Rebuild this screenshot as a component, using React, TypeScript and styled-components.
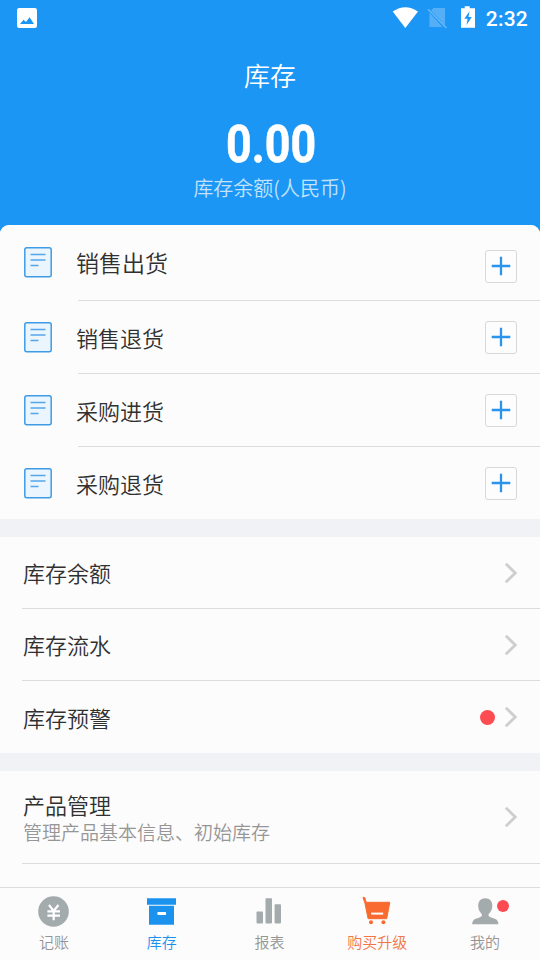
import React from "react";
import styled, { createGlobalStyle } from "styled-components";

const GlobalStyle = createGlobalStyle`
  * { box-sizing: border-box; }
  html, body { margin: 0; padding: 0; }
  body {
    background: #fcfcfc;
    font-family: "Noto Sans CJK SC", sans-serif;
    font-weight: 350;
    color: #303030;
  }
  svg { display: block; flex: none; }
`;

const Screen = styled.div`
  width: 540px;
  height: 960px;
  display: flex;
  flex-direction: column;
  overflow: hidden;
  background: #1c96f5;
`;

const StatusBar = styled.div`
  height: 36px;
  flex: none;
  display: flex;
  align-items: center;
  padding: 0 12px 0 17px;
`;

const Spacer = styled.div`
  flex: 1;
`;

const Clock = styled.span`
  margin: 1px 0 0 10px;
  font: 500 21px/24px Roboto, sans-serif;
  letter-spacing: 0.2px;
  color: #fff;
`;

const Hero = styled.header`
  height: 189px;
  flex: none;
  display: flex;
  flex-direction: column;
  align-items: center;
  color: #fff;
`;

const Title = styled.h1`
  margin: 20px 0 0;
  font-size: 26px;
  line-height: 38px;
  font-weight: 350;
`;

const Amount = styled.div`
  margin-top: 21px;
  padding-left: 3px;
  font: 700 52px/60px Roboto, sans-serif;
  -webkit-text-stroke: 0.6px #fff;
  transform: scaleX(0.86);
`;

const Caption = styled.div`
  margin-top: -1px;
  font-size: 20px;
  line-height: 28px;
  color: #c3e3fc;
`;

const Content = styled.main`
  flex: 1;
  min-height: 0;
  overflow: hidden;
  border-radius: 9px 9px 0 0;
  background: #f0f2f5;
`;

const Section = styled.section`
  background: #fcfcfc;
  & + & { margin-top: 18px; }
`;

const ActionRow = styled.div<{ $first?: boolean }>`
  height: ${(p) => (p.$first ? 75 : 72)}px;
  padding: ${(p) => (p.$first ? "0 23px 1px 24px" : "0 23px 0 24px")};
  display: flex;
  align-items: center;
`;

const ActionName = styled.span<{ $first?: boolean }>`
  flex: 1;
  margin-left: 24px;
  font-size: ${(p) => (p.$first ? 23 : 22)}px;
  line-height: 34px;
`;

const AddButton = styled.button<{ $first?: boolean }>`
  width: 32px;
  height: 33px;
  padding: 0 0 1px;
  margin-top: ${(p) => (p.$first ? 9 : 1)}px;
  display: flex;
  align-items: center;
  justify-content: center;
  border: 1.5px solid #d8d8d8;
  border-radius: 3px;
  background: #fdfdfd;
`;

const Divider = styled.div<{ $inset: number }>`
  height: 1px;
  margin-left: ${(p) => p.$inset}px;
  background: #dbdcdd;
`;

const LinkRow = styled.div<{ $height: number }>`
  height: ${(p) => p.$height}px;
  padding: 0 22px 0 23px;
  display: flex;
  align-items: center;
  gap: 9px;
`;

const LinkText = styled.div`
  flex: 1;
  padding-bottom: 1px;
`;

const LinkTitle = styled.div`
  font-size: 22px;
  line-height: 30px;
`;

const LinkHint = styled.div`
  font-size: 19px;
  line-height: 25px;
  color: #969696;
`;

const Dot = styled.i<{ $size: number }>`
  width: ${(p) => p.$size}px;
  height: ${(p) => p.$size}px;
  flex: none;
  border-radius: 50%;
  background: #fc4c52;
`;

const TabBar = styled.nav`
  height: 73px;
  flex: none;
  display: grid;
  grid-template-columns: repeat(5, 1fr);
  padding-right: 1px;
  border-top: 1px solid #dcdddd;
  background: #fcfcfc;
`;

const Tab = styled.div<{ $color: string }>`
  display: flex;
  flex-direction: column;
  align-items: center;
  padding-top: 7px;
  font-size: 15px;
  line-height: 22px;
  color: ${(p) => p.$color};
`;

const TabIcon = styled.div`
  position: relative;
  width: 34px;
  height: 34px;
  margin-bottom: 2px;
`;

const TabBadge = styled(Dot)`
  position: absolute;
  left: 29px;
  top: 5px;
`;

const DocIcon = () => (
  <svg width="28" height="31" viewBox="0 0 28 31" fill="none">
    <rect x="0.8" y="0.8" width="26.4" height="29" rx="2" fill="#eaf5fd" stroke="#3f9be6" strokeWidth="1.5" />
    <path d="M6.5 7.5h15M6.5 13h15M6.5 18.5h8" stroke="#55a7ea" strokeWidth="1.7" />
  </svg>
);

const PlusIcon = () => (
  <svg width="20" height="20" viewBox="0 0 20 20">
    <path d="M10 .7v18.6M.7 10h18.6" stroke="#2a94ec" strokeWidth="2.3" />
  </svg>
);

const Chevron = () => (
  <svg width="14" height="22" viewBox="0 0 14 22" fill="none">
    <path d="M1.8 1.8L11.3 11L1.8 20.2" stroke="#cecece" strokeWidth="2.8" />
  </svg>
);

const PhotoIcon = () => (
  <svg width="20" height="20" viewBox="0 0 20 20">
    <rect width="20" height="20" rx="2.2" fill="#fff" />
    <path d="M3 16l3.6-4.3 2.3 2.3 3.7-4.7L17 16z" fill="#1c96f5" />
  </svg>
);

const SignalIcons = () => (
  <svg width="84" height="24" viewBox="0 0 84 24">
    <path d="M.7 5.3Q13.3-3.2 26 5.3L13.3 21.7z" transform="translate(0 .3)" fill="#fff" />
    <path d="M41.5 2H53v17.2L39 4.5zM37.5 6.7L50.5 21H37.5z" fill="#55aff7" />
    <path d="M36 3.2L54.5 22" stroke="#65b7f7" strokeWidth="1.6" />
    <path d="M69 2.2h3.7V.3h5v1.9H83v19.6H69z" fill="#fff" />
    <path d="M77.5 5.3l-5.2 7.4h3.3l-1.1 6.2 5.3-8h-3.3z" fill="#1c96f5" />
  </svg>
);

const YenIcon = () => (
  <svg width="34" height="34" viewBox="0 0 34 34">
    <circle cx="16.5" cy="16.5" r="15.3" fill="#a3abad" />
    <path d="M12 10l4.7 6 4.7-6M10.4 16.3H23M10.4 20.7H23M16.7 16v9.3" fill="none" stroke="#fff" strokeWidth="2.2" />
  </svg>
);

const BoxIcon = () => (
  <svg width="34" height="34" viewBox="0 0 34 34">
    <path d="M2 3.2h29v6.6H2zM4 10.8h25v19H4z" fill="#1b92ee" />
    <rect x="12.3" y="17.1" width="8.8" height="3" rx="1" fill="#fff" />
  </svg>
);

const BarsIcon = () => (
  <svg width="34" height="34" viewBox="0 0 34 34" fill="#a3abad">
    <rect x="4.5" y="16.4" width="6.5" height="12" rx=".8" />
    <rect x="13.5" y="3.2" width="6.5" height="25.2" rx=".8" />
    <rect x="22.6" y="9.3" width="6.4" height="19.1" rx=".8" />
  </svg>
);

const CartIcon = () => (
  <svg width="34" height="34" viewBox="0 0 34 34">
    <path d="M3 2.3l1.8.3 1.4 4.7h23.6l-3.1 16.4H8.1L5 8.6z" fill="#f96a31" stroke="#f96a31" strokeLinejoin="round" />
    <path d="M11.2 18.6h12" stroke="#fff" strokeWidth="2" />
    <circle cx="11" cy="27.3" r="2" fill="#f96a31" />
    <circle cx="23.4" cy="27.3" r="2" fill="#f96a31" />
  </svg>
);

const UserIcon = () => (
  <svg width="34" height="34" viewBox="0 0 34 34">
    <path d="M17.3 3.3c4.6 0 7 3 7 7.4 0 3.8-1.4 6-3.6 8.4-.8 1.7.2 2.7 2.3 3.3 4.5 1.2 7.4 2 7.4 6.9H4.2c0-4.8 2.9-5.7 7.3-6.9 2.1-.6 3-1.5 2.2-3.3-2.1-2.4-3.5-4.6-3.5-8.4 0-4.4 2.5-7.4 7.1-7.4z" fill="#a3abad" />
  </svg>
);

const actions = ["销售出货", "销售退货", "采购进货", "采购退货"];

const tabs = [
  { name: "记账", color: "#949494", icon: <YenIcon /> },
  { name: "库存", color: "#1b92ee", icon: <BoxIcon /> },
  { name: "报表", color: "#949494", icon: <BarsIcon /> },
  { name: "购买升级", color: "#f17545", icon: <CartIcon /> },
  { name: "我的", color: "#949494", icon: <UserIcon />, badge: true },
];

export default function App() {
  return (
    <Screen>
      <GlobalStyle />
      <StatusBar>
        <PhotoIcon />
        <Spacer />
        <SignalIcons />
        <Clock>2:32</Clock>
      </StatusBar>
      <Hero>
        <Title>库存</Title>
        <Amount>0.00</Amount>
        <Caption>库存余额(人民币)</Caption>
      </Hero>
      <Content>
        <Section>
          {actions.map((name, i) => (
            <React.Fragment key={name}>
              {i > 0 && <Divider $inset={78} />}
              <ActionRow $first={i === 0}>
                <DocIcon />
                <ActionName $first={i === 0}>{name}</ActionName>
                <AddButton $first={i === 0} aria-label={name}>
                  <PlusIcon />
                </AddButton>
              </ActionRow>
            </React.Fragment>
          ))}
        </Section>
        <Section>
          <LinkRow $height={71}>
            <LinkText><LinkTitle>库存余额</LinkTitle></LinkText>
            <Chevron />
          </LinkRow>
          <Divider $inset={22} />
          <LinkRow $height={71}>
            <LinkText><LinkTitle>库存流水</LinkTitle></LinkText>
            <Chevron />
          </LinkRow>
          <Divider $inset={22} />
          <LinkRow $height={72}>
            <LinkText><LinkTitle>库存预警</LinkTitle></LinkText>
            <Dot $size={15} />
            <Chevron />
          </LinkRow>
        </Section>
        <Section>
          <LinkRow $height={92}>
            <LinkText>
              <LinkTitle>产品管理</LinkTitle>
              <LinkHint>管理产品基本信息、初始库存</LinkHint>
            </LinkText>
            <Chevron />
          </LinkRow>
          <Divider $inset={22} />
          <LinkRow $height={72} />
        </Section>
      </Content>
      <TabBar>
        {tabs.map((tab) => (
          <Tab key={tab.name} $color={tab.color}>
            <TabIcon>
              {tab.icon}
              {tab.badge && <TabBadge $size={12} />}
            </TabIcon>
            {tab.name}
          </Tab>
        ))}
      </TabBar>
    </Screen>
  );
}
